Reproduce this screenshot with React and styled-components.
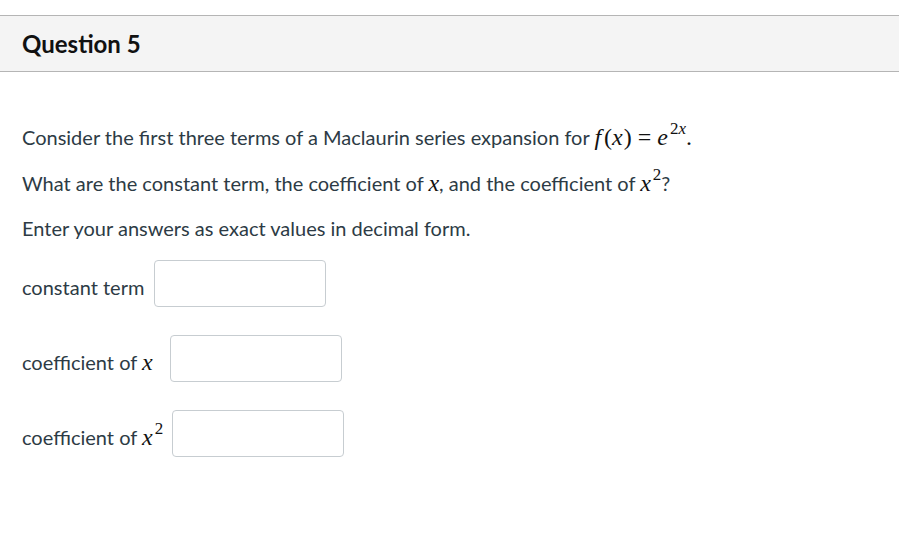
import styled, { createGlobalStyle } from "styled-components";

const GlobalStyle = createGlobalStyle`
  body {
    margin: 0;
    background: #fff;
    font-family: Lato, "Open Sans", sans-serif;
    color: #2d3b45;
  }
`;

const Page = styled.div`
  padding-top: 15px;
`;

const Header = styled.div`
  background: #f4f4f4;
  border-top: 1px solid #b5b5b5;
  border-bottom: 1px solid #b5b5b5;
  height: 55px;
  display: flex;
  align-items: center;
  padding-left: 22px;
`;

const Title = styled.h2`
  margin: 0;
  font-size: 24px;
  font-weight: 700;
  color: #111;
`;

const Body = styled.div`
  padding: 53px 22px 0;
`;

const Para = styled.p`
  margin: 0 0 ${(p) => p.gap ?? 21}px;
  font-size: 20px;
  line-height: 24px;
  color: #2d3b45;
`;

const M = styled.span`
  font-family: "Liberation Serif", "DejaVu Serif", serif;
  font-style: ${(p) => (p.upright ? "normal" : "italic")};
  font-size: 24px;
  line-height: 1;
  color: #111;
  margin: 0 ${(p) => p.space || 0}px;
  padding-right: ${(p) => p.italicFix || 0}px;
`;

const Sup = styled.sup`
  font-family: "Liberation Serif", serif;
  font-size: 17px;
  line-height: 0;
  margin-left: 2px;
  color: #111;
  vertical-align: ${(p) => p.raise || 11}px;
`;

const Answers = styled.div`
  display: flex;
  flex-direction: column;
  gap: 28px;
  margin-top: 20px;
`;

const Row = styled.label`
  display: flex;
  align-items: center;
  gap: 10px;
  font-size: 20px;
  color: #2d3b45;
`;

const LabelText = styled.span`
  padding-top: 6px;
`;

const Box = styled.input`
  width: 172px;
  height: 47px;
  box-sizing: border-box;
  border: 1px solid #c7cdd1;
  border-radius: 4px;
  background: #fff;
  margin-left: ${(p) => p.offset || 0}px;
`;

export default function App() {
  return (
    <Page>
      <GlobalStyle />
      <Header>
        <Title>Question 5</Title>
      </Header>
      <Body>
        <Para gap={22}>
          Consider the first three terms of a Maclaurin series expansion for{" "}
          <M italicFix={3}>f</M>
          <M upright>(</M>
          <M italicFix={1}>x</M>
          <M upright>)</M>
          <M upright space={6}>=</M>
          <M>e</M>
          <Sup>
            2<i>x</i>
          </Sup>
          <M upright>.</M>
        </Para>
        <Para gap={21}>
          What are the constant term, the coefficient of <M>x</M>, and the
          coefficient of <M>x</M>
          <Sup>2</Sup>?
        </Para>
        <Para gap={0}>Enter your answers as exact values in decimal form.</Para>
        <Answers>
          <Row>
            <LabelText>constant term</LabelText>
            <Box type="text" />
          </Row>
          <Row>
            <LabelText>
              coefficient of <M>x</M>
            </LabelText>
            <Box type="text" offset={7} />
          </Row>
          <Row>
            <LabelText>
              coefficient of <M>x</M>
              <Sup>2</Sup>
            </LabelText>
            <Box type="text" offset={-1} />
          </Row>
        </Answers>
      </Body>
    </Page>
  );
}
